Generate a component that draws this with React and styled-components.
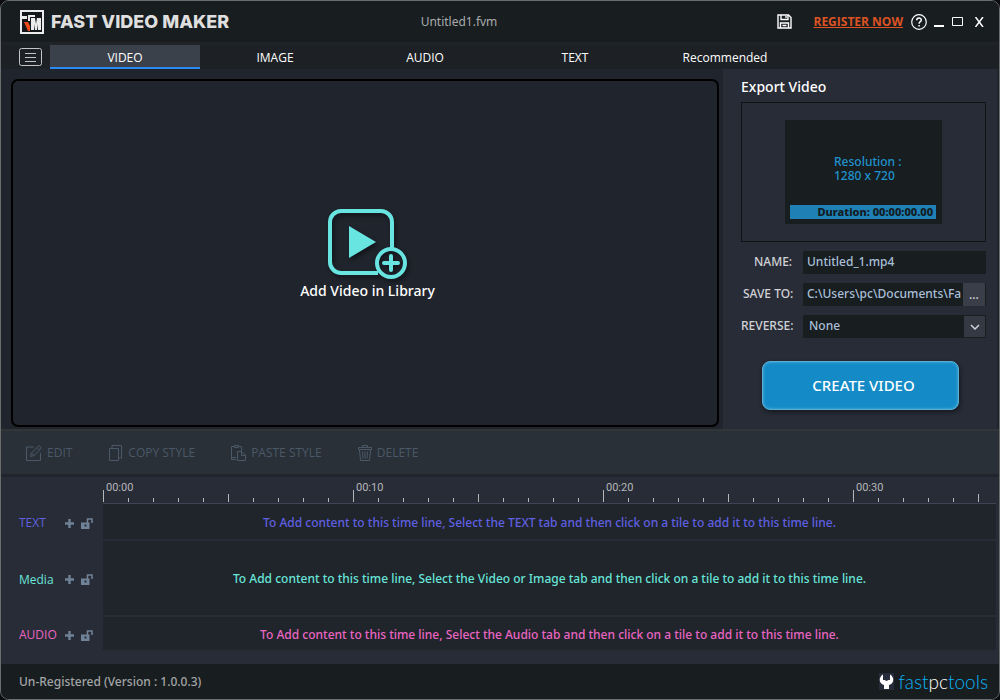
import React from "react";
import styled, { createGlobalStyle } from "styled-components";

const Global = createGlobalStyle`
  * { box-sizing: border-box; }
  body { margin: 0; background: #0b0d10; }
  button, input, select { font: inherit; color: inherit; margin: 0; }
  button { background: none; border: 0; padding: 0; cursor: pointer; }
`;

const compactFont = `"Open Sans", "Noto Sans", sans-serif`;

const Window = styled.div`
  display: flex;
  flex-direction: column;
  min-height: 100vh;
  border: 1px solid #6b6d6f;
  border-radius: 9px;
  overflow: hidden;
  background: #20242c;
  color: #fff;
  font: 500 12px/16px "Noto Sans", "Open Sans", sans-serif;
`;

const TitleBar = styled.header`
  display: grid;
  grid-template-columns: 9fr auto 11fr;
  align-items: center;
  height: 44px;
  padding: 0 12px 0 19px;
  background: #181d20;
  border-bottom: 3px solid #202429;
`;
const Brand = styled.div`
  display: flex;
  align-items: center;
  gap: 7px;
`;
const BrandName = styled.h1`
  margin: 0;
  font: 800 18px/24px Inter, sans-serif;
  color: #dfdfdf;
  white-space: nowrap;
`;
const FileName = styled.div`
  color: #a9abad;
  font-weight: 400;
`;
const TitleActions = styled.div`
  display: flex;
  justify-content: flex-end;
  align-items: center;
`;
const SaveButton = styled.button`
  display: flex;
  margin-right: 21px;
`;
const RegisterLink = styled.a`
  margin-right: 8px;
  color: #dc5323;
  font-family: ${compactFont};
  font-weight: 700;
`;
const WindowControls = styled.div`
  display: flex;
  align-items: center;
  gap: 7px;
`;
const IconButton = styled.button`
  display: flex;
`;

const TabBar = styled.nav`
  display: flex;
  height: 24px;
  padding-left: 18px;
  background: #1d2125;
  font-family: ${compactFont};
  font-weight: 400;
`;
const MenuButton = styled.button`
  display: flex;
  align-items: center;
  width: 24px;
  margin-right: 7px;
`;
const Tab = styled.button`
  width: 150px;
  padding-top: 4px;
  border-bottom: 2px solid ${(p) => (p.$active ? "#2a8bf0" : "transparent")};
  background: ${(p) => (p.$active ? "#3b414b" : "transparent")};
`;

const Main = styled.main`
  display: flex;
  flex: 1;
  padding-right: 2px;
`;
const LibraryArea = styled.section`
  display: flex;
  flex: 1;
  padding: 10px 4px 2px 10px;
`;
const DropZone = styled.button`
  display: flex;
  flex: 1;
  flex-direction: column;
  align-items: center;
  justify-content: center;
  padding: 2px 0 0 5px;
  border: 2px solid #000;
  border-radius: 7px;
  font-size: 14px;
  line-height: 20px;
`;

const ExportPanel = styled.section`
  flex: none;
  width: 274px;
  padding: 8px 11px 0 18px;
  background: #282c37;
`;
const PanelTitle = styled.h2`
  margin: 0 0 5px;
  font-size: 14px;
  line-height: 20px;
  font-weight: 500;
`;
const PreviewFrame = styled.div`
  display: flex;
  justify-content: center;
  padding: 17px;
  border: 1px solid #101215;
`;
const Preview = styled.div`
  display: flex;
  flex-direction: column;
  justify-content: space-between;
  width: 157px;
  height: 104px;
  padding: 35px 6px 5px 5px;
  background: #181d20;
`;
const Resolution = styled.div`
  padding-left: 44px;
  line-height: 14px;
  color: #1f92cd;
`;
const Duration = styled.div`
  padding-right: 3px;
  background: #1e80b5;
  color: #131a20;
  font-size: 11px;
  font-weight: 800;
  line-height: 14px;
  text-align: right;
`;
const Fields = styled.form`
  display: grid;
  grid-template-columns: 62px minmax(0, 1fr);
  row-gap: 9px;
  margin-top: 9px;
`;
const Label = styled.label`
  line-height: 21px;
  padding-left: ${(p) => p.$indent || 0}px;
  color: #d0d2d5;
  white-space: nowrap;
`;
const Control = styled.div`
  display: flex;
  position: relative;
  height: 23px;
  background: #181d20;
  color: #a9bfd8;
`;
const TextInput = styled.input`
  flex: 1;
  min-width: 0;
  height: 20px;
  padding: 0;
  margin: 0 2px 0 4px;
  border: 0;
  outline: 0;
  background: transparent;
`;
const BrowseButton = styled.button`
  width: 22px;
  margin-right: 1px;
  background: #393e48;
  color: #d0d2d5;
`;
const Select = styled.select`
  flex: 1;
  height: 22px;
  padding: 0 6px;
  border: 0;
  appearance: none;
  background: transparent;
`;
const SelectArrow = styled.span`
  position: absolute;
  inset: 1px 1px 1px auto;
  display: flex;
  align-items: center;
  justify-content: center;
  width: 21px;
  background: #343943;
  pointer-events: none;
`;
const CreateButton = styled.button`
  display: block;
  width: 197px;
  height: 49px;
  margin: 23px 0 0 21px;
  padding: 0 0 2px 6px;
  border: 1px solid #5aaed6;
  border-radius: 8px;
  background: #148bc6;
  box-shadow: inset 0 0 3px #62b8df, 1px 2px 4px #14171c;
  font-size: 15px;
  line-height: 20px;
`;

const Toolbar = styled.div`
  display: flex;
  align-items: center;
  gap: 36px;
  height: 48px;
  padding: 0 24px;
  background: #293037;
  border-top: 2px solid #323537;
  border-bottom: 3px solid #20262b;
  font-family: ${compactFont};
  font-weight: 400;
`;
const ToolButton = styled.button`
  display: flex;
  align-items: center;
  gap: 5px;
  color: #4b5867;
`;

const Timeline = styled.section`
  padding: 0 3px 14px 0;
  background: #282c37;
`;
const Ruler = styled.div`
  display: flex;
  align-items: flex-end;
  height: 27px;
  margin-left: 102px;
  padding-bottom: 1px;
  border-bottom: 1px solid #3f4353;
  overflow: hidden;
`;
const Tick = styled.div`
  flex: none;
  display: flex;
  align-items: flex-end;
  width: 25px;
  height: 22px;
  &::before {
    content: "";
    flex: none;
    width: 1px;
    height: ${(p) => p.$size}px;
    background: #b5b6b8;
  }
`;
const TickLabel = styled.span`
  align-self: flex-start;
  margin-left: 2px;
  font: 11px/16px Roboto, sans-serif;
  color: #b5b6b8;
`;
const Track = styled.div`
  display: flex;
  height: ${(p) => p.$height}px;
  color: ${(p) => p.$color};
  & + & { margin-top: 2px; }
`;
const TrackHead = styled.div`
  display: flex;
  align-items: center;
  width: 102px;
  padding: 3px 9px 0 18px;
  font-family: ${compactFont};
  font-weight: 400;
`;
const TrackName = styled.span`
  width: 46px;
`;
const TrackButtons = styled.div`
  display: flex;
  align-items: center;
  gap: 7px;
`;
const TrackBody = styled.div`
  display: flex;
  flex: 1;
  align-items: center;
  justify-content: center;
  padding-top: 2px;
  background: #20242b;
`;

const Footer = styled.footer`
  display: flex;
  align-items: center;
  justify-content: space-between;
  height: 35px;
  padding: 0 11px 0 18px;
  background: #181d20;
  color: #a3a5a7;
`;
const Vendor = styled.a`
  display: flex;
  align-items: center;
  gap: 4px;
  color: #0ab4f5;
  text-decoration: none;
  font: 300 19px/28px Lato, sans-serif;
`;
const VendorMiddle = styled.span`
  color: #fff;
`;

const stroke = { fill: "none", stroke: "currentColor" };

const LogoMark = () => (
  <svg width="24" height="24" viewBox="0 0 24 24">
    <path d="M1 1h22v22H1z" fill="#14181b" stroke="#ececec" strokeWidth="2" />
    <path d="M2 6h5v3H2zM8 5h7v2H8zM8 7h2v4H8z" fill="#ececec" />
    <path d="M4 12h4l2 4v5H8z" fill="#f04a1c" />
    <path d="M11 20V8h4l1 6 1-6h4v12h-3v-6l-1 6h-2l-1-6v6z" fill="#ececec" />
  </svg>
);
const SaveIcon = () => (
  <svg width="15" height="15" viewBox="0 0 15 15" {...stroke} strokeWidth="1.4">
    <path d="M1 1h10.500L14 3.500V14H1z" />
    <path d="M4 1v4.500h7V1M3.500 14V9h8v5M9 2v2M5.500 11.500h4" />
  </svg>
);
const HelpIcon = () => (
  <svg width="16" height="16" viewBox="0 0 16 16" {...stroke} strokeWidth="1.2">
    <circle cx="8" cy="8" r="7.300" />
    <path d="M5.700 6.200C5.700 3.200 10.300 3.300 10.300 6c0 1.700-2.200 1.700-2.200 3.700M8.100 11v1.500" strokeWidth="1.500" />
  </svg>
);
const MenuIcon = () => (
  <svg width="24" height="19" viewBox="0 0 24 19" {...stroke} color="#c3c5c7">
    <rect x=".5" y=".5" width="22" height="17" rx="2" />
    <path d="M6 5.500h11M6 9.500h11M6 13.500h11" />
  </svg>
);
const AddVideoShape = styled.svg`
  color: #68e4e1;
  filter: drop-shadow(2px 3px 2px #12151a);
`;
const AddVideoIcon = () => (
  <AddVideoShape width="84" height="74" viewBox="0 0 84 74" {...stroke}>
    <path d="M52 66H15a11 11 0 0 1-11-11V15A11 11 0 0 1 15 4h40a11 11 0 0 1 11 11v26" strokeWidth="4" />
    <path d="M23 19l27 16-27 16z" fill="currentColor" stroke="none" />
    <circle cx="65" cy="56" r="14" strokeWidth="4" />
    <path d="M65 49v14M58 56h14" strokeWidth="4" strokeLinecap="round" />
  </AddVideoShape>
);
const EditIcon = () => (
  <svg width="17" height="16" viewBox="0 0 17 16" {...stroke}>
    <path d="M9 2H1.500v13.500h14V8" />
    <path d="M5.500 11.500l1-3.500L14 .5l2.300 2.500L9 10.500zM12 2.500L14.500 5M6.500 8L9 10.500" />
  </svg>
);
const CopyIcon = () => (
  <svg width="15" height="16" viewBox="0 0 15 16" {...stroke}>
    <path d="M1.500 3.500h9v12h-9zM4 3V.5h9.500V13H11" />
  </svg>
);
const PasteIcon = () => (
  <svg width="15" height="16" viewBox="0 0 15 16" {...stroke}>
    <path d="M5 14.500H.5v-13H3M8 1.500h2.500V6M3.500.5h4v2h-4zM.5 12.500H5" />
    <path d="M6.500 6.500h4.500l3.500 3.500v5.500h-8zM10.500 6.500v4h4" />
  </svg>
);
const TrashIcon = () => (
  <svg width="14" height="16" viewBox="0 0 14 16" {...stroke}>
    <path d="M.5 2.500h13v2H.5zM4.500 2V.5h5V2M1.500 5l1 10.500h9l1-10.500M4.500 6.500l.5 7M7 6.500v7M9.500 6.500l-.5 7" />
  </svg>
);
const PlusIcon = () => (
  <svg width="9" height="9" viewBox="0 0 9 9" stroke="#6f8298" strokeWidth="2.400">
    <path d="M4.500 0v9M0 4.500h9" />
  </svg>
);
const UnlockIcon = () => (
  <svg width="12" height="11" viewBox="0 0 12 11">
    <path d="M0 4.500h8.500V11H0z" fill="#6f8298" />
    <path d="M6.500 5V1h4.500v4" fill="none" stroke="#6f8298" strokeWidth="1.500" />
    <path d="M3.500 6.500h2v2h-2z" fill="#282c37" />
  </svg>
);
const WrenchIcon = () => (
  <svg width="15" height="17" viewBox="0 0 15 17">
    <path d="M0 0h15v17H0z" fill="#272c3a" />
    <path d="M4 1.500v5.500h1.500l2 1 2-1H11V1.500c5 3 4 9-1 10.500V16H5v-4C0 10.500-1 4.500 4 1.500z" fill="#fff" />
    <path d="M6.500 1h2v6h-2z" fill="#272c3a" />
  </svg>
);

const TABS = ["VIDEO", "IMAGE", "AUDIO", "TEXT", "Recommended"];
const TOOLS = [
  ["EDIT", EditIcon],
  ["COPY STYLE", CopyIcon],
  ["PASTE STYLE", PasteIcon],
  ["DELETE", TrashIcon],
];
const TRACKS = [
  { name: "TEXT", tab: "TEXT", height: 35, color: "#5f60e0" },
  { name: "Media", tab: "Video or Image", height: 74, color: "#68e4d8" },
  { name: "AUDIO", tab: "Audio", height: 33, color: "#e866c2" },
];
const TICKS = Array.from({ length: 120 }, (_, i) => i);
const tickSize = (i) => (i % 10 === 0 ? 12 : i % 5 === 0 ? 8 : 4);

export default function App() {
  return (
    <Window>
      <Global />
      <TitleBar>
        <Brand>
          <LogoMark />
          <BrandName>FAST VIDEO MAKER</BrandName>
        </Brand>
        <FileName>Untitled1.fvm</FileName>
        <TitleActions>
          <SaveButton aria-label="Save"><SaveIcon /></SaveButton>
          <RegisterLink href="#register">REGISTER NOW</RegisterLink>
          <WindowControls>
            <IconButton aria-label="Help"><HelpIcon /></IconButton>
            <IconButton aria-label="Minimize">
              <svg width="10" height="10" viewBox="0 0 10 10"><path d="M0 8h10v2H0z" fill="#fff" /></svg>
            </IconButton>
            <IconButton aria-label="Maximize">
              <svg width="13" height="9" viewBox="0 0 13 9" {...stroke}><path d="M1.500.5h10v8h-10z" /></svg>
            </IconButton>
            <IconButton aria-label="Close">
              <svg width="16" height="10" viewBox="0 0 16 10" {...stroke} strokeWidth="1.500"><path d="M4.500 0l7.500 10M12 0L4.500 10" /></svg>
            </IconButton>
          </WindowControls>
        </TitleActions>
      </TitleBar>

      <TabBar>
        <MenuButton aria-label="Menu"><MenuIcon /></MenuButton>
        {TABS.map((tab, i) => (
          <Tab key={tab} $active={i === 0}>{tab}</Tab>
        ))}
      </TabBar>

      <Main>
        <LibraryArea>
          <DropZone>
            <AddVideoIcon />
            Add Video in Library
          </DropZone>
        </LibraryArea>
        <ExportPanel>
          <PanelTitle>Export Video</PanelTitle>
          <PreviewFrame>
            <Preview>
              <Resolution>Resolution :<br />1280 x 720</Resolution>
              <Duration>Duration: 00:00:00.00</Duration>
            </Preview>
          </PreviewFrame>
          <Fields>
            <Label htmlFor="name" $indent={13}>NAME:</Label>
            <Control><TextInput id="name" defaultValue="Untitled_1.mp4" /></Control>
            <Label htmlFor="path" $indent={2}>SAVE TO:</Label>
            <Control>
              <TextInput id="path" defaultValue="C:\Users\pc\Documents\FastVideoMaker" />
              <BrowseButton type="button" aria-label="Browse">...</BrowseButton>
            </Control>
            <Label htmlFor="reverse">REVERSE:</Label>
            <Control>
              <Select id="reverse"><option>None</option></Select>
              <SelectArrow>
                <svg width="10" height="6" viewBox="0 0 10 6" {...stroke} color="#d0d2d5" strokeWidth="1.500"><path d="M1 1l4 4 4-4" /></svg>
              </SelectArrow>
            </Control>
          </Fields>
          <CreateButton>CREATE VIDEO</CreateButton>
        </ExportPanel>
      </Main>

      <Toolbar>
        {TOOLS.map(([name, Icon]) => (
          <ToolButton key={name}><Icon />{name}</ToolButton>
        ))}
      </Toolbar>

      <Timeline>
        <Ruler>
          {TICKS.map((i) => (
            <Tick key={i} $size={tickSize(i)}>
              {i % 10 === 0 && i < 40 && <TickLabel>{`00:${i || "00"}`}</TickLabel>}
            </Tick>
          ))}
        </Ruler>
        {TRACKS.map((t) => (
          <Track key={t.name} $height={t.height} $color={t.color}>
            <TrackHead>
              <TrackName>{t.name}</TrackName>
              <TrackButtons>
                <IconButton aria-label={`Add to ${t.name}`}><PlusIcon /></IconButton>
                <IconButton aria-label={`Lock ${t.name}`}><UnlockIcon /></IconButton>
              </TrackButtons>
            </TrackHead>
            <TrackBody>
              {`To Add content to this time line, Select the ${t.tab} tab and then click on a tile to add it to this time line.`}
            </TrackBody>
          </Track>
        ))}
      </Timeline>

      <Footer>
        <span>Un-Registered (Version : 1.0.0.3)</span>
        <Vendor href="#fastpctools" aria-label="fastpctools">
          <WrenchIcon />
          <span>fast<VendorMiddle>pc</VendorMiddle>tools</span>
        </Vendor>
      </Footer>
    </Window>
  );
}
